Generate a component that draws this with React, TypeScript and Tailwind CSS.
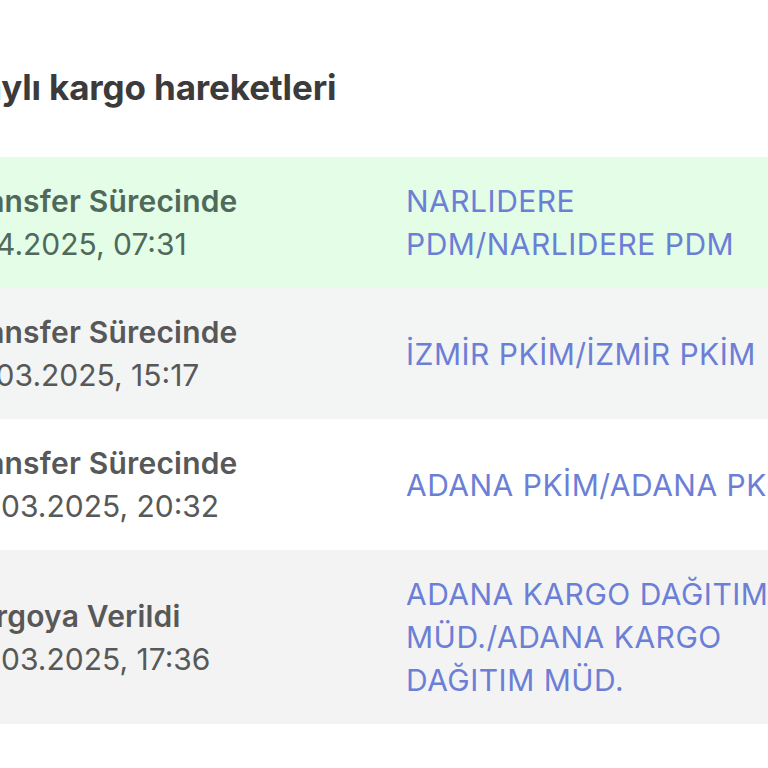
import React from "react";

type Move = {
  status: string;
  date: string;
  place: string;
  bg: string;
  tone: string;
};

const moves: Move[] = [
  {
    status: "Transfer Sürecinde",
    date: "1.04.2025, 07:31",
    place: "NARLIDERE PDM/NARLIDERE PDM",
    bg: "bg-[#e3fde7]",
    tone: "text-[#50695a]",
  },
  {
    status: "Transfer Sürecinde",
    date: "31.03.2025, 15:17",
    place: "İZMİR PKİM/İZMİR PKİM",
    bg: "bg-[#f3f4f4]",
    tone: "text-[#585858]",
  },
  {
    status: "Transfer Sürecinde",
    date: "29.03.2025, 20:32",
    place: "ADANA PKİM/ADANA PKİM",
    bg: "bg-white",
    tone: "text-[#585858]",
  },
  {
    status: "Kargoya Verildi",
    date: "28.03.2025, 17:36",
    place: "ADANA KARGO DAĞITIM MÜD./ADANA KARGO DAĞITIM MÜD.",
    bg: "bg-[#f3f3f3]",
    tone: "text-[#585858]",
  },
];

const MoveRow = ({ move }: { move: Move }) => {
  return (
    <div className={`grid grid-cols-[449px_410px] items-center pt-[23px] pb-[22px] ${move.bg}`}>
      <div className={`flex flex-col ${move.tone}`}>
        <span className="text-[30px] font-semibold leading-[43px] tracking-[0.2px] whitespace-nowrap">
          {move.status}
        </span>
        <span className="text-[30px] leading-[43px] whitespace-nowrap">{move.date}</span>
      </div>
      <div className="text-[30px] leading-[43px] tracking-[0.5px] text-[#6b7fd6]">
        {move.place}
      </div>
    </div>
  );
};

const App = () => {
  return (
    <div className="w-[768px] h-[768px] overflow-hidden bg-white font-['Inter','Noto_Sans',sans-serif]">
      <div className="w-[900px] -ml-[43px] pt-[66px]">
        <h2 className="-ml-[34px] text-[35px] leading-[42px] font-bold text-[#3b3b3b] tracking-[-0.15px] whitespace-nowrap">
          Detaylı kargo hareketleri
        </h2>
        <div className="mt-[49px] flex flex-col">
          {moves.map((m, i) => (
            <MoveRow key={i} move={m} />
          ))}
        </div>
      </div>
    </div>
  );
};

export default App;
